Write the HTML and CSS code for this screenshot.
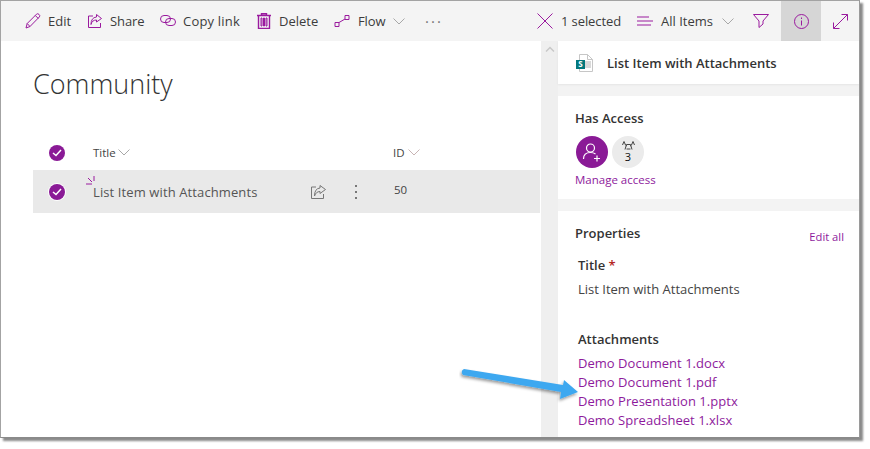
FILE: index.html
```html
<!DOCTYPE html>
<html lang="en">
<head>
<meta charset="utf-8">
<title>Community</title>
<link rel="stylesheet" href="styles.css">
</head>
<body>
<div class="shot">
  <div class="cmdbar">
    <div class="cmd cmd-edit"><svg class="ic" width="16" height="16" viewBox="0 0 16 16"><path d="M1 15l1.200-4.500L11.600 1.100q1-.9 2.400.3t.4 2.500L5 13.500zM2.200 10.500L5 13.500M10.300 2.500l3 3"/></svg><span>Edit</span></div>
    <div class="cmd cmd-share"><svg class="ic" width="16" height="16" viewBox="0 0 16 16"><path d="M6 3H1.500v11.500h12V10M9.500 1.500L14.500 5.500 9.500 9V7Q5 7 4 11.500 4 4.500 9.500 4z"/></svg><span>Share</span></div>
    <div class="cmd cmd-copy"><svg class="ic" width="16" height="16" viewBox="0 0 16 16"><rect x=".5" y="2.500" width="10" height="7" rx="3.500"/><rect x="5.500" y="5.500" width="10" height="7" rx="3.500"/></svg><span>Copy link</span></div>
    <div class="cmd cmd-delete"><svg class="ic ic-del" width="14" height="16" viewBox="0 0 14 16"><path class="del-frame" d="M1.500 2.500h11v13h-11zM4.500 2.500V.7h5v1.800M0 2.500h14"/><path d="M4 5h1v8H4zM6.500 5h1v8h-1zM9 5h1v8H9z"/></svg><span>Delete</span></div>
    <div class="cmd cmd-flow"><svg class="ic" width="16" height="16" viewBox="0 0 16 16"><path d="M1 9.500h4v4H1zM11 2.500h4v4h-4zM5 9.500L11 6"/></svg><span>Flow</span><svg class="chev" width="12" height="7" viewBox="0 0 12 7"><path d="M.5.500L6 6l5.500-5.500"/></svg></div>
    <div class="cmd cmd-more" aria-label="More">···</div>
    <div class="spacer"></div>
    <div class="cmd cmd-x"><svg class="ic" width="16" height="16" viewBox="0 0 16 16"><path d="M.5.500l15 15M15.500.500l-15 15"/></svg><span>1 selected</span></div>
    <div class="cmd cmd-view"><svg class="ic" width="16" height="10" viewBox="0 0 16 10"><path d="M0 1h12M0 5h16M0 9h14"/></svg><span>All Items</span><svg class="chev" width="12" height="7" viewBox="0 0 12 7"><path d="M.5.500L6 6l5.500-5.500"/></svg></div>
    <div class="cmd cmd-filter"><svg class="ic" width="16" height="14" viewBox="0 0 16 14"><path d="M.5.500h15L10 7v3l-4 3.500V7z"/></svg></div>
    <div class="cmd cmd-info"><svg class="ic" width="15" height="15" viewBox="0 0 15 15"><circle cx="7.500" cy="7.500" r="7"/><path d="M7.500 6.500v5M7.500 3.500v1.500"/></svg></div>
    <div class="cmd cmd-expand"><svg class="ic" width="15" height="15" viewBox="0 0 15 15"><path d="M.5 14.500l14-14M8.500.500h6v6M.5 8.500v6h6"/></svg></div>
  </div>
  <div class="main">
    <div class="list">
      <h1 class="page-title">Community</h1>
      <div class="row row-head">
        <span class="check"><svg width="10" height="8" viewBox="0 0 10 8"><path d="M1 4l3 2.500L9 1"/></svg></span>
        <span class="col-title">Title<svg class="chev" width="12" height="7" viewBox="0 0 12 7"><path d="M.5.500L6 6l5.500-5.500"/></svg></span>
        <span class="col-id">ID<svg class="chev chev-id" width="12" height="7" viewBox="0 0 12 7"><path d="M.5.500L6 6l5.500-5.500"/></svg></span>
      </div>
      <div class="row row-item">
        <span class="check"><svg width="10" height="8" viewBox="0 0 10 8"><path d="M1 4l3 2.500L9 1"/></svg></span>
        <span class="col-title item-name">List Item with Attachments<svg class="sparkle" width="9" height="9" viewBox="0 0 9 9"><path d="M0 8h6M2 2l4 4M8 0v5"/></svg></span>
        <svg class="row-share" width="16" height="14" viewBox="0 0 16 14"><path d="M5 2H.500v11.500h12V9M9 .500l5.500 4L9 8.500V6.500Q5 6.500 3.500 11 3.500 3.500 9 3z"/></svg>
        <span class="row-more"><i></i><i></i><i></i></span>
        <span class="col-id item-id">50</span>
      </div>
    </div>
    <div class="scroll"><svg width="10" height="6" viewBox="0 0 10 6"><path d="M1 5.500L5 1.500l4 4"/></svg></div>
    <div class="panel">
      <div class="card card-head">
        <svg class="sp-icon" width="18" height="18" viewBox="0 0 18 18"><path class="sp-page" d="M3.500.500h8l5 5v12h-13z"/><path class="sp-fold" d="M11.500.500v5h5"/><rect class="sp-lines" x="9" y="7" width="6" height="7"/><rect class="sp-box" x="0" y="6" width="9" height="9"/><text class="sp-s" x="4.500" y="13.300">S</text></svg>
        <span class="head-title">List Item with Attachments</span>
      </div>
      <div class="card card-access">
        <div class="sec-title">Has Access</div>
        <div class="avatars">
          <span class="avatar avatar-add"><svg width="20" height="20" viewBox="0 0 20 20"><circle cx="8.500" cy="6" r="4"/><path d="M1.500 17q0-6.500 7-6.500 3 0 5 1.500M15 13.500v6M12 16.500h6"/></svg></span>
          <span class="avatar avatar-group"><svg width="13" height="9" viewBox="0 0 13 9"><path d="M4.500 3.500h4l1.500 5M4.500 3.500L3 8.500M4.500 8h4M.5 4L2 .5 3.500 4M9.500 4L11 .5 12.500 4M3.500 4l1.500 1M9.500 4L8 5"/></svg><b>3</b></span>
        </div>
        <a class="link link-manage">Manage access</a>
      </div>
      <div class="card card-props">
        <div class="props-head"><div class="sec-title">Properties</div><a class="link link-edit">Edit all</a></div>
        <div class="field-label">Title <span class="req">*</span></div>
        <div class="field-value">List Item with Attachments</div>
        <div class="field-label attach-label">Attachments</div>
        <a class="link attach">Demo Document 1.docx</a>
        <a class="link attach">Demo Document 1.pdf</a>
        <a class="link attach">Demo Presentation 1.pptx</a>
        <a class="link attach">Demo Spreadsheet 1.xlsx</a>
      </div>
    </div>
  </div>
</div>
<svg class="arrow" width="128" height="46" viewBox="0 0 128 46"><defs><filter id="ds" x="-10%" y="-30%" width="120%" height="170%"><feDropShadow dx="-1" dy="2" stdDeviation="1.500" flood-color="#000" flood-opacity=".4"/></filter></defs><path filter="url(#ds)" d="M5 3L104 19 105 14 119 26 101 33 102 26 4 9Q1 5 5 3z"/></svg>
</body>
</html>
```
FILE: styles.css
```css
* { box-sizing: border-box; }
html, body { margin: 0; padding: 0; background: #fff; }
body { width: 870px; height: 449px; overflow: hidden; position: relative; font-family: "Open Sans", "Noto Sans", sans-serif; color: #333; }
.shot { width: 860px; height: 438px; border-top: 1px solid #a3a3a3; border-left: 1px solid #a3a3a3; border-right: 1px solid #9a9a9a; border-bottom: 1px solid #8a8a8a; box-shadow: 3px 3px 2px #8a8a8a; background: #fff; display: flex; flex-direction: column; overflow: hidden; }
.cmdbar { height: 40px; flex: none; background: #f4f4f4; display: flex; align-items: stretch; font-size: 13px; }
.cmd { display: flex; align-items: center; color: #3c3c3c; flex: none; }
.ic { fill: none; stroke: #9a1a9e; stroke-width: 1; flex: none; }
.del-frame { stroke-width: 1.400; }
.chev { fill: none; stroke: #a8a8a8; stroke-width: 1; flex: none; }
.cmd-edit { margin-left: 24px; width: 62px; gap: 7px; }
.cmd-share { width: 73px; gap: 7px; letter-spacing: -.1px; }
.cmd-copy { width: 97px; gap: 7px; letter-spacing: .2px; }
.cmd-delete { width: 77px; gap: 8px; }
.cmd-flow { width: 91px; gap: 8px; letter-spacing: -.1px; }
.cmd-flow .chev { margin-left: -1px; }
.cmd-more { font-size: 15px; letter-spacing: 2px; color: #777; }
.spacer { flex: 1; }
.cmd-x { width: 100px; gap: 8px; letter-spacing: -.1px; }
.cmd-view { width: 116px; gap: 8px; }
.cmd-view .chev { margin-left: 1px; }
.cmd-filter { width: 28px; }
.cmd-info { width: 40px; background: #d6d6d6; justify-content: center; }
.cmd-expand { width: 38px; justify-content: center; }
.main { flex: 1; display: flex; min-height: 0; }
.list { width: 540px; flex: none; padding: 0 0 0 32px; }
.page-title { margin: 24px 0 0; height: 72px; font-size: 27px; font-weight: 300; color: #333; line-height: 38px; }
.row { display: flex; align-items: center; height: 43px; position: relative; width: 507px; }
.row-head { height: 31px; margin-bottom: 2px; font-size: 11.500px; }
.row-item { background: #e9e9e9; font-size: 13px; }
.check { width: 16px; height: 16px; border-radius: 50%; background: #8a1a96; margin-left: 16px; flex: none; display: flex; align-items: center; justify-content: center; box-shadow: 0 0 0 1px #fff; }
.check svg { fill: none; stroke: #fff; stroke-width: 1.500; }
.col-title { margin-left: 28px; width: 300px; flex: none; display: flex; align-items: center; gap: 2px; position: relative; color: #444; }
.item-name { width: 216px; color: #555; letter-spacing: .11px; }
.col-id { font-size: 11.500px; color: #444; display: flex; align-items: center; gap: 3px; }
.chev-id { stroke: #c8b4b4; }
.sparkle { position: absolute; left: -7px; top: -7px; fill: none; stroke: #9a1a9e; stroke-width: 1; }
.row-share { fill: none; stroke: #777; stroke-width: 1; margin-left: 2px; flex: none; }
.row-more { display: flex; flex-direction: column; gap: 4px; width: 2px; margin-left: 28px; margin-right: 37px; flex: none; }
.row-more i { width: 2px; height: 2px; background: #777; }
.item-id { position: relative; top: -2px; letter-spacing: -.2px; }
.scroll { width: 17px; flex: none; background: #efefef; display: flex; justify-content: center; align-items: flex-start; padding-top: 5px; }
.scroll svg { fill: none; stroke: #c8c8c8; stroke-width: 1.500; }
.panel { flex: 1; background: #f3f3f3; display: flex; flex-direction: column; gap: 12px; min-width: 0; }
.card { background: #fff; flex: none; }
.card-head { height: 43px; display: flex; align-items: center; padding-left: 18px; gap: 13px; box-shadow: 0 1px 2px rgba(0,0,0,.06); }
.sp-icon { flex: none; }
.sp-page { fill: #fff; stroke: #c6c6c6; stroke-width: 1; }
.sp-fold { fill: none; stroke: #c6c6c6; stroke-width: 1; }
.sp-lines { fill: #d9d9d9; }
.sp-box { fill: #03787c; }
.sp-s { fill: #fff; font-size: 8px; font-weight: 700; text-anchor: middle; }
.head-title { font-size: 13px; font-weight: 600; color: #333; }
.card-access { height: 103px; padding: 12px 0 0 17px; }
.sec-title { font-size: 13px; font-weight: 600; color: #333; line-height: 20px; }
.avatars { display: flex; gap: 4px; margin-top: 8px; margin-left: 1px; }
.avatar { width: 32px; height: 32px; border-radius: 50%; display: flex; flex-direction: column; align-items: center; justify-content: center; flex: none; }
.avatar-add { background: #8a1a96; }
.avatar-add svg { fill: none; stroke: #fff; stroke-width: 1.200; }
.avatar-group { background: #ebebeb; }
.avatar-group svg { fill: none; stroke: #444; stroke-width: 1; }
.avatar-group b { font-size: 11px; font-weight: 400; color: #111; line-height: 12px; margin-top: 1px; }
.link { color: #8e1a9c; display: block; }
.link-manage { font-size: 11.500px; line-height: 16px; margin-top: 4px; }
.card-props { flex: 1; padding: 12px 0 0 20px; position: relative; }
.props-head { display: flex; justify-content: space-between; margin-left: -3px; height: 24px; }
.link-edit { font-size: 11.200px; margin: 6px 15px 0 0; line-height: 16px; }
.field-label { font-size: 13px; font-weight: 600; color: #333; line-height: 20px; margin-top: 8px; }
.req { color: #b3261e; }
.field-value { font-size: 13px; line-height: 20px; color: #444; margin-top: 4px; }
.attach-label { margin-top: 30px; }
.attach { font-size: 13px; line-height: 19px; letter-spacing: .03px; }
.attach-label + .attach { margin-top: 5px; }
.arrow { position: absolute; left: 459px; top: 366px; fill: #3ea8f0; }
```
